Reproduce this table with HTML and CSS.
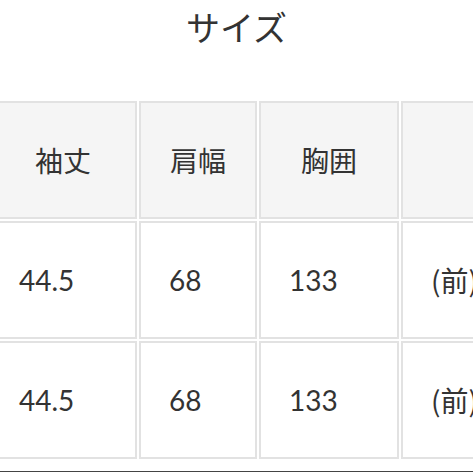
FILE: index.html
```html
<!DOCTYPE html>
<html lang="ja">
<head>
<meta charset="utf-8">
<link rel="stylesheet" href="styles.css">
</head>
<body>
<div class="page">
  <h1 class="title">サイズ</h1>
  <div class="table-wrap">
    <div class="grid">
      <div class="cell head">袖丈</div>
      <div class="cell head">肩幅</div>
      <div class="cell head">胸囲</div>
      <div class="cell head"></div>
      <div class="cell num">44.5</div>
      <div class="cell num">68</div>
      <div class="cell num">133</div>
      <div class="cell jp">(前)</div>
      <div class="cell num">44.5</div>
      <div class="cell num">68</div>
      <div class="cell num">133</div>
      <div class="cell jp">(前)</div>
    </div>
  </div>
  <div class="rule"></div>
</div>
</body>
</html>
```
FILE: styles.css
```css
html, body {
  margin: 0;
  padding: 0;
  background: #fff;
  overflow: hidden;
}
.page {
  width: 473px;
  height: 473px;
  overflow: hidden;
  font-family: "Noto Sans CJK JP", "Noto Sans", sans-serif;
  color: #333;
}
.title {
  margin: 0;
  padding-top: 11px;
  font-size: 34px;
  line-height: 32px;
  font-weight: 400;
  text-align: center;
  color: #333;
}
.table-wrap {
  margin-top: 58px;
  overflow: hidden;
}
.grid {
  display: grid;
  grid-template-columns: 148px 118px 140px 140px;
  grid-auto-rows: 118px;
  gap: 2px;
  margin-left: -11px;
  width: 552px;
}
.cell {
  box-sizing: border-box;
  border: 2px solid #e2e2e2;
  padding-left: 28px;
  display: flex;
  align-items: center;
  background: #fff;
}
.head {
  background: #f5f5f5;
  font-size: 28px;
  justify-content: center;
  padding-left: 0;
}
.num {
  font-family: "Lato", "Noto Sans", sans-serif;
  font-size: 28px;
}
.jp {
  font-size: 28px;
}
.rule {
  margin-top: 12px;
  border-top: 1px solid #444;
}
```
